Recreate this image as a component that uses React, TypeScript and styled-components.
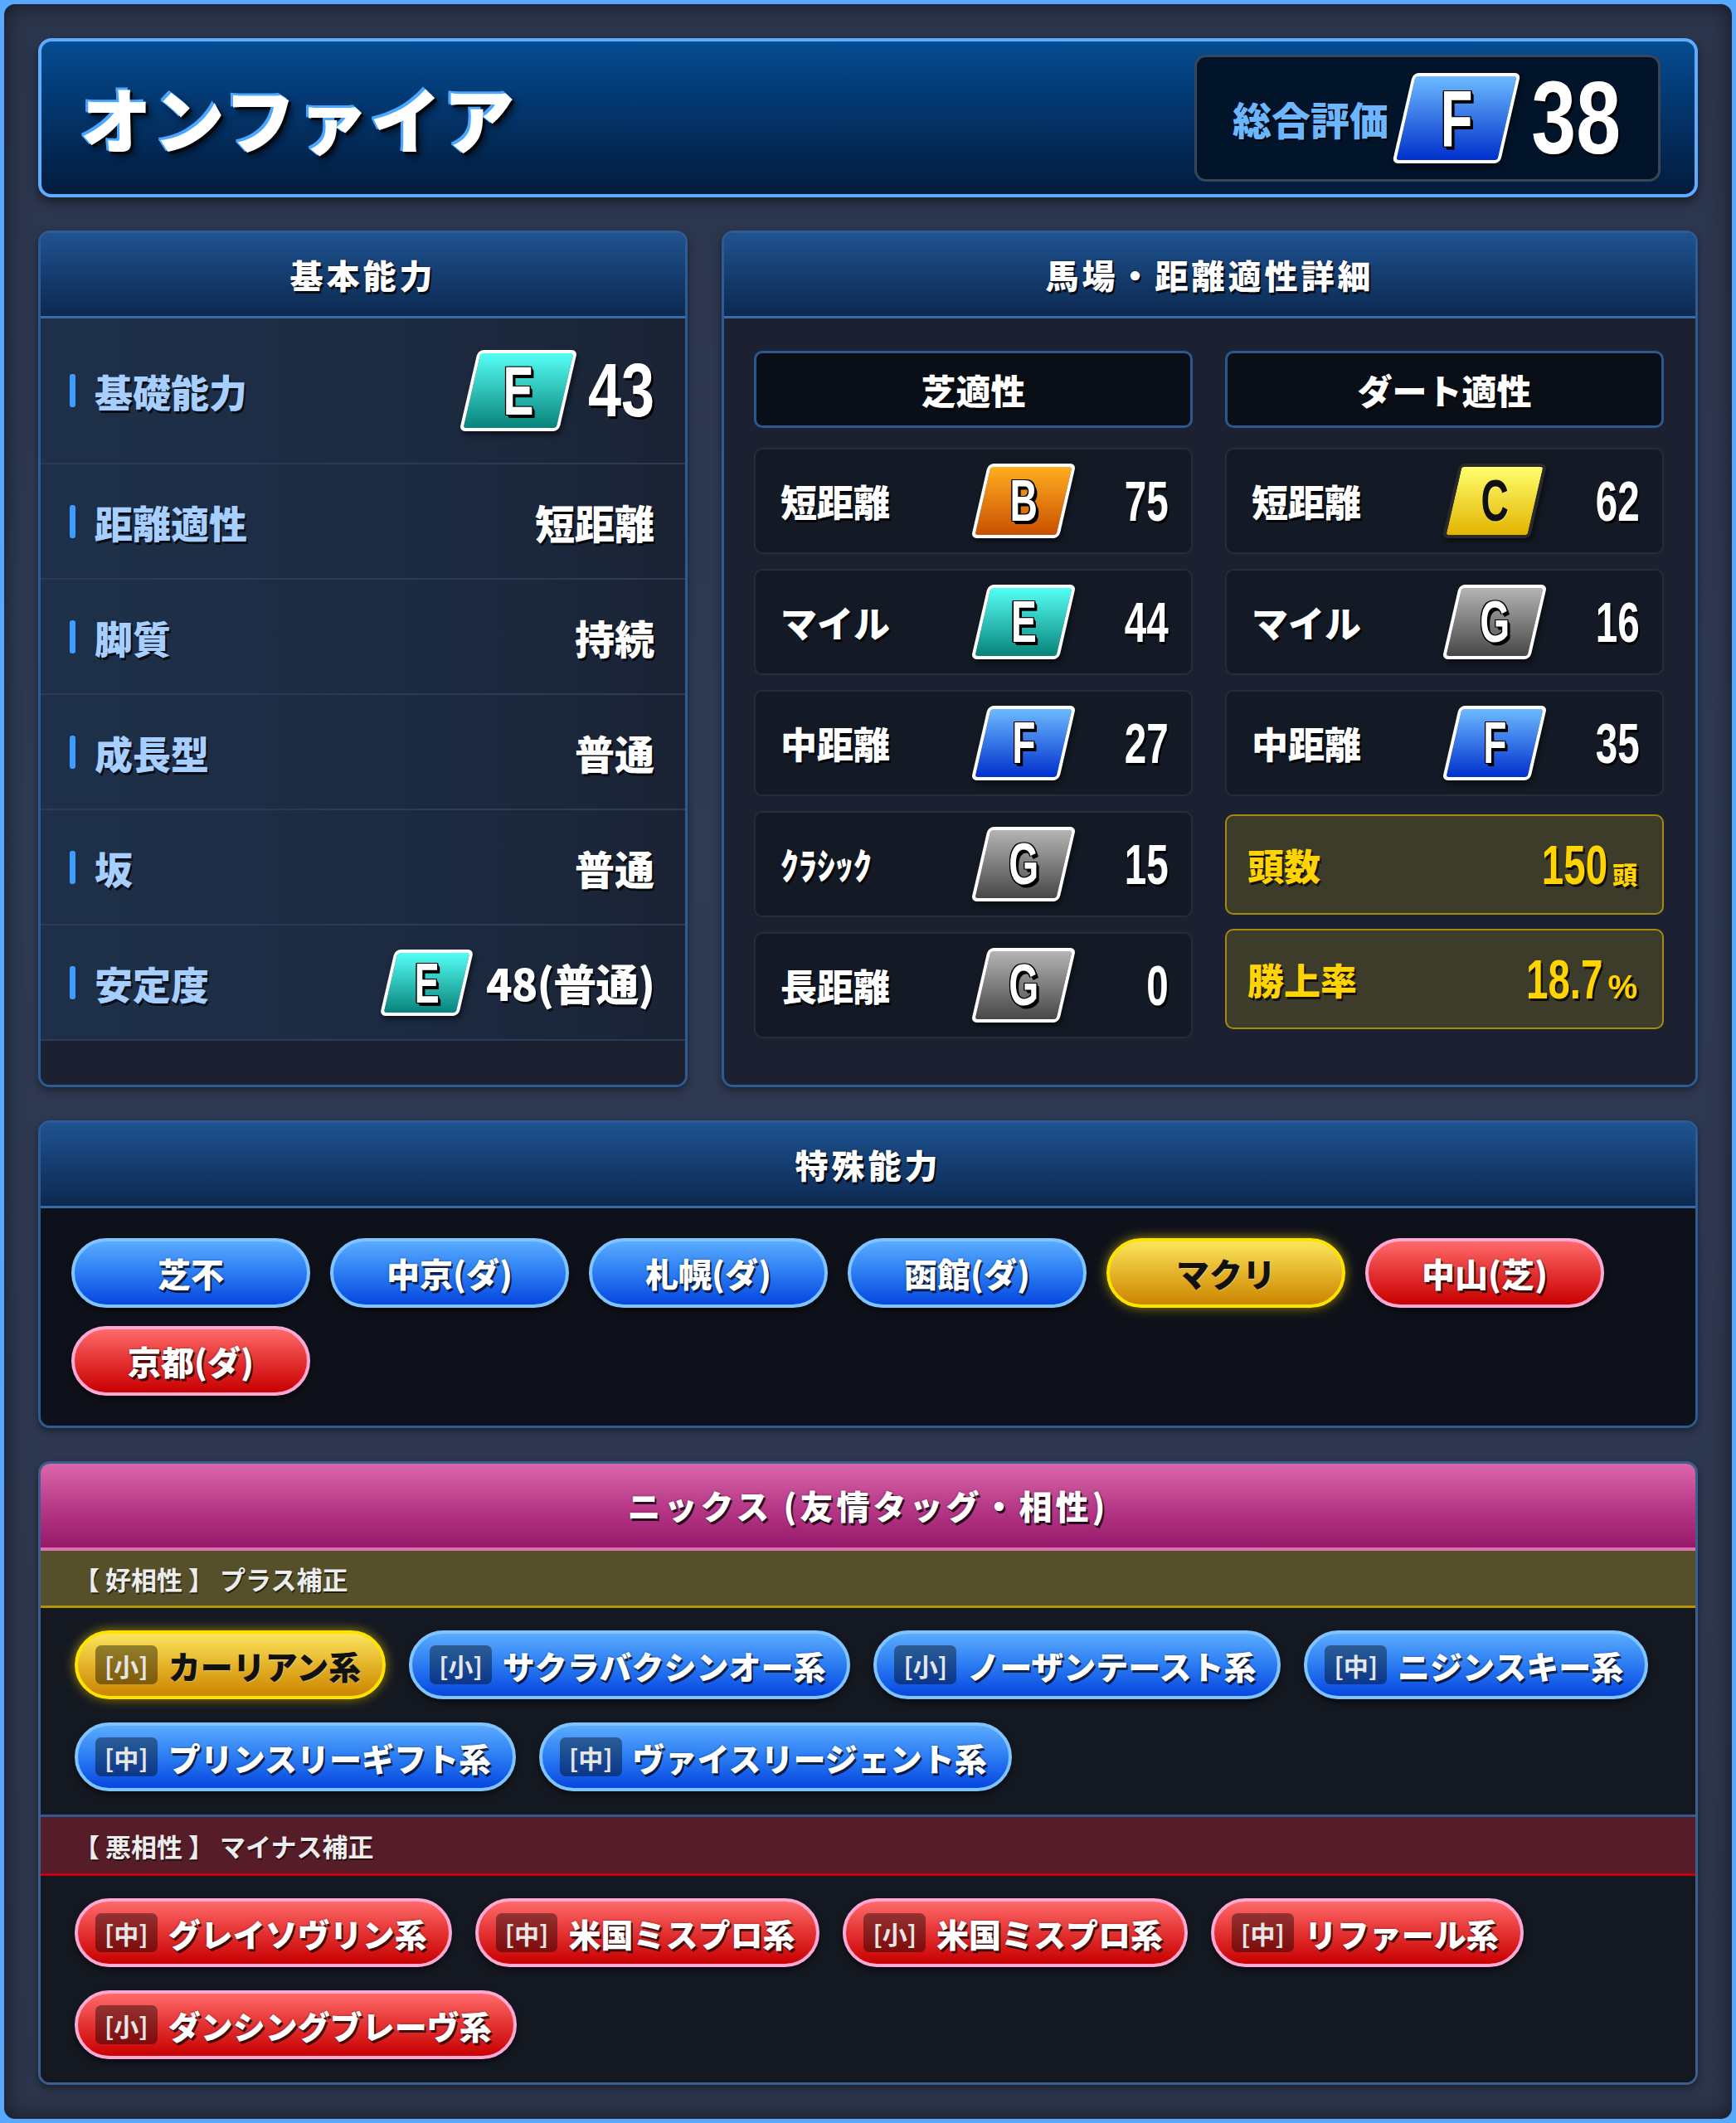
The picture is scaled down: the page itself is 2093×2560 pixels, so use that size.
import React from "react";
import styled, { createGlobalStyle } from "styled-components";

const JP = `"Noto Sans CJK JP", "Noto Sans", sans-serif`;
const NUM = `"Liberation Sans", Arimo, sans-serif`;

const Global = createGlobalStyle`
  html, body { margin: 0; padding: 0; background: #56a9ff; }
  body { width: 2093px; height: 2560px; overflow: hidden; font-family: ${JP}; }
  #root { width: 2093px; height: 2560px; }
  * { box-sizing: border-box; }
`;

const Frame = styled.div`
  width: 2093px;
  height: 2560px;
  border: 5px solid #56a9ff;
  border-radius: 18px;
  background: linear-gradient(180deg, #2b354c 0%, #2f3a53 40%, #2c354b 100%);
  box-shadow: inset 0 0 26px rgba(0, 0, 0, 0.55);
  padding: 41px;
  display: flex;
  flex-direction: column;
  gap: 40px;
`;

/* condensed number: fixed layout box, glyphs squeezed horizontally */
const Squeeze = styled.span<{ $w: number; $sx: number; $left?: boolean }>`
  display: inline-flex;
  width: ${(p) => p.$w}px;
  justify-content: ${(p) => (p.$left ? "flex-start" : "flex-end")};
  white-space: nowrap;
  & > span {
    display: inline-block;
    transform: scaleX(${(p) => p.$sx});
    transform-origin: ${(p) => (p.$left ? "left" : "right")} center;
  }
`;

const Num = ({ v, w, sx, left }: { v: string | number; w: number; sx: number; left?: boolean }) => (
  <Squeeze $w={w} $sx={sx} $left={left}>
    <span>{v}</span>
  </Squeeze>
);

/* ---------- header ---------- */
const Header = styled.header`
  height: 192px;
  flex-shrink: 0;
  border: 4px solid #5cadff;
  border-radius: 16px;
  background: linear-gradient(180deg, #054c92 0%, #03356c 45%, #021b3c 100%);
  box-shadow: 0 6px 12px rgba(0, 0, 0, 0.45);
  display: flex;
  align-items: center;
  justify-content: space-between;
  padding: 0 41px 0 47px;
`;

const HorseName = styled.h1`
  margin: 0;
  font-family: ${JP};
  font-weight: 900;
  font-size: 86px;
  letter-spacing: 2px;
  line-height: 1;
  color: #fff;
  text-shadow: -3px -3px 0 #4aa6ff, -3px -1px 0 #4aa6ff, 3px 3px 0 #05070c,
    5px 6px 8px rgba(0, 0, 0, 0.6);
`;

const ScoreBox = styled.div`
  height: 153px;
  display: flex;
  align-items: center;
  gap: 17px;
  padding: 0 45px 0 43px;
  background: #021429;
  border: 3px solid #3a4656;
  border-radius: 14px;
`;

const ScoreLabel = styled.span`
  font-family: ${JP};
  font-weight: 900;
  font-size: 47px;
  color: #6cb6ff;
  text-shadow: 2px 2px 0 rgba(0, 0, 0, 0.8);
`;

const ScoreValue = styled.span`
  font-family: ${NUM};
  font-weight: 700;
  font-size: 124px;
  line-height: 1;
  color: #fff;
  margin-left: 8px;
  text-shadow: 3px 3px 0 #000;
`;

/* ---------- grade badge ---------- */
type Tone = "B" | "C" | "E" | "F" | "G";
const toneFill: Record<Tone, [string, string]> = {
  B: ["#ffae1f", "#c94f00"],
  C: ["#ffff6e", "#e2b400"],
  E: ["#55fff6", "#07837a"],
  F: ["#6cbaff", "#002fcc"],
  G: ["#b4b4b4", "#474747"],
};

const Badge = styled.div<{ $w: number; $h: number; $tone: Tone }>`
  width: ${(p) => p.$w}px;
  height: ${(p) => p.$h}px;
  flex-shrink: 0;
  transform: skewX(-13deg);
  border: 4px solid ${(p) => (p.$tone === "C" ? "#2a2a2a" : "#ffffff")};
  border-radius: 7px;
  background: linear-gradient(
    180deg,
    ${(p) => toneFill[p.$tone][0]} 0%,
    ${(p) => toneFill[p.$tone][1]} 100%
  );
  box-shadow: 3px 4px 6px rgba(0, 0, 0, 0.55);
  display: flex;
  align-items: center;
  justify-content: center;
`;

const BadgeLetter = styled.span<{ $size: number; $dark: boolean }>`
  display: inline-block;
  transform: skewX(13deg) scaleX(0.66);
  font-family: ${NUM};
  font-weight: 700;
  font-size: ${(p) => p.$size}px;
  line-height: 1;
  color: ${(p) => (p.$dark ? "#111" : "#fff")};
  text-shadow: ${(p) =>
    p.$dark
      ? "1px 1px 0 rgba(255,255,255,0.35)"
      : "-2px -1px 0 #000, 2px -1px 0 #000, -2px 1px 0 #000, 2px 1px 0 #000, 3px 2px 0 #000, 4px 3px 0 #000, 5px 4px 0 #000"};
`;

const Grade = ({ g, w, h, size }: { g: Tone; w: number; h: number; size: number }) => (
  <Badge $w={w} $h={h} $tone={g}>
    <BadgeLetter $size={size} $dark={g === "C"}>
      {g}
    </BadgeLetter>
  </Badge>
);

/* ---------- panels ---------- */
const PanelRow = styled.div`
  height: 1033px;
  flex-shrink: 0;
  display: grid;
  grid-template-columns: 783px 1177px;
  gap: 41px;
`;

const Panel = styled.section<{ $pink?: boolean }>`
  border: 3px solid ${(p) => (p.$pink ? "#3a5f90" : "#2c5b95")};
  border-radius: 14px;
  overflow: hidden;
  display: flex;
  flex-direction: column;
  box-shadow: 0 4px 10px rgba(0, 0, 0, 0.4);
  background: #1b2131;
`;

const PanelHeader = styled.div<{ $pink?: boolean }>`
  height: ${(p) => (p.$pink ? 105 : 103)}px;
  flex-shrink: 0;
  display: flex;
  align-items: center;
  justify-content: center;
  background: ${(p) =>
    p.$pink
      ? "linear-gradient(180deg, #dc66ab 0%, #b83a88 50%, #961868 100%)"
      : "linear-gradient(180deg, #1f5391 0%, #153d70 50%, #0c2950 100%)"};
  border-bottom: ${(p) => (p.$pink ? "4px solid #e070b4" : "3px solid #3b6ca6")};
  font-family: ${JP};
  font-weight: 900;
  font-size: 40px;
  letter-spacing: 4px;
  color: #fff;
  text-shadow: 2px 3px 0 rgba(0, 0, 0, 0.75), 0 0 3px rgba(0, 0, 0, 0.4);
`;

/* basic stats */
const StatRow = styled.div<{ $h: number }>`
  height: ${(p) => p.$h}px;
  flex-shrink: 0;
  display: flex;
  align-items: center;
  padding: 0 37px 0 35px;
  background: linear-gradient(90deg, #1e3049 0%, #1c2b42 55%, #1a2334 100%);
  border-bottom: 2px solid #2b3b55;
`;

const StatLabel = styled.div`
  display: flex;
  align-items: center;
  gap: 23px;
  font-family: ${JP};
  font-weight: 900;
  font-size: 46px;
  color: #a6cfff;
  text-shadow: 2px 3px 0 rgba(0, 0, 0, 0.7);
`;

const LabelBar = styled.span`
  width: 7px;
  height: 40px;
  border-radius: 3px;
  background: #3f9cff;
`;

const StatValue = styled.div`
  margin-left: auto;
  display: flex;
  align-items: center;
  gap: 24px;
  font-family: ${JP};
  font-weight: 900;
  font-size: 48px;
  color: #fff;
  text-shadow: 2px 3px 0 rgba(0, 0, 0, 0.75);
`;

const StableText = styled.span`
  font-size: 52px;
  letter-spacing: -1px;
`;

const BigNumber = styled.span`
  font-family: ${NUM};
  font-weight: 700;
  font-size: 90px;
  line-height: 1;
  color: #fff;
  text-shadow: 3px 3px 0 #000;
`;

const Filler = styled.div`
  flex: 1;
  background: #1b2130;
`;

/* aptitude detail */
const DetailBody = styled.div`
  flex: 1;
  padding: 39px 38px 0 36px;
  display: flex;
  flex-direction: column;
  gap: 24px;
  background: #1b2131;
`;

const TwoCols = styled.div`
  display: grid;
  grid-template-columns: 1fr 1fr;
  column-gap: 39px;
`;

const SubHead = styled.div`
  height: 93px;
  display: flex;
  align-items: center;
  justify-content: center;
  background: #0a0e16;
  border: 3px solid #2b5890;
  border-radius: 10px;
  font-family: ${JP};
  font-weight: 900;
  font-size: 42px;
  color: #fff;
  text-shadow: 2px 3px 0 rgba(0, 0, 0, 0.8);
`;

const Column = styled.div`
  display: flex;
  flex-direction: column;
  gap: 18px;
`;

const AptCell = styled.div`
  height: 128px;
  display: grid;
  grid-template-columns: 1fr 130px 110px;
  align-items: center;
  padding: 0 27px 0 30px;
  background: #141a25;
  border: 2px solid #262d3a;
  border-radius: 10px;
`;

const AptLabel = styled.span`
  font-family: ${JP};
  font-weight: 900;
  font-size: 44px;
  color: #fff;
  white-space: nowrap;
  text-shadow: 2px 3px 0 rgba(0, 0, 0, 0.8);
`;

const BadgeSlot = styled.div`
  display: flex;
  justify-content: center;
`;

const AptNumber = styled.span`
  justify-self: end;
  font-family: ${NUM};
  font-weight: 700;
  font-size: 68px;
  line-height: 1;
  color: #fff;
  text-shadow: 3px 3px 0 #000;
`;

const GoldGroup = styled.div`
  margin-top: 4px;
  display: flex;
  flex-direction: column;
  gap: 17px;
`;

const GoldBox = styled.div`
  height: 121px;
  display: flex;
  align-items: center;
  justify-content: space-between;
  padding: 0 30px 0 25px;
  background: #3d3b29;
  border: 2px solid #a88a10;
  border-radius: 10px;
`;

const GoldLabel = styled.span`
  font-family: ${JP};
  font-weight: 900;
  font-size: 44px;
  color: #ffd400;
  text-shadow: 2px 3px 0 rgba(0, 0, 0, 0.7);
`;

const GoldValue = styled.span`
  display: flex;
  align-items: baseline;
  gap: 6px;
  font-family: ${NUM};
  font-weight: 700;
  font-size: 66px;
  line-height: 1;
  color: #ffd400;
  text-shadow: 3px 3px 0 rgba(0, 0, 0, 0.75);
`;

const GoldUnit = styled.span<{ $jp?: boolean }>`
  font-family: ${(p) => (p.$jp ? JP : NUM)};
  font-weight: ${(p) => (p.$jp ? 900 : 700)};
  font-size: ${(p) => (p.$jp ? 30 : 40)}px;
`;

/* pills */
type PillTone = "blue" | "gold" | "red";
const pillStyle: Record<PillTone, { bg: string; border: string; glow: string; color: string }> = {
  blue: {
    bg: "linear-gradient(180deg, #5aabff 0%, #2b7cf2 50%, #0646e0 100%)",
    border: "#80c4ff",
    glow: "0 4px 6px rgba(0,0,0,0.55)",
    color: "#fff",
  },
  gold: {
    bg: "linear-gradient(180deg, #fbe55e 0%, #e4b42a 50%, #cc8400 100%)",
    border: "#ffe300",
    glow: "0 0 14px rgba(255, 222, 0, 0.6), 0 4px 6px rgba(0,0,0,0.4)",
    color: "#111",
  },
  red: {
    bg: "linear-gradient(180deg, #ff6a6a 0%, #e43232 50%, #c80000 100%)",
    border: "#ffa8d6",
    glow: "0 4px 6px rgba(0,0,0,0.55)",
    color: "#fff",
  },
};

const SpecialBody = styled.div`
  background: #0e111a;
  padding: 36px 37px;
  display: flex;
  flex-wrap: wrap;
  gap: 22px 24px;
`;

const SkillPill = styled.div<{ $tone: PillTone }>`
  width: 288px;
  height: 84px;
  border-radius: 42px;
  border: 4px solid ${(p) => pillStyle[p.$tone].border};
  background: ${(p) => pillStyle[p.$tone].bg};
  box-shadow: ${(p) => pillStyle[p.$tone].glow};
  display: flex;
  align-items: center;
  justify-content: center;
  font-family: ${JP};
  font-weight: 900;
  font-size: 40px;
  color: ${(p) => pillStyle[p.$tone].color};
  text-shadow: ${(p) =>
    p.$tone === "gold"
      ? "1px 1px 0 rgba(255,255,255,0.3)"
      : "2px 3px 0 rgba(0,0,0,0.7), 0 0 3px rgba(0,0,0,0.4)"};
`;

/* nicks */
const NickBand = styled.div<{ $bad?: boolean }>`
  height: ${(p) => (p.$bad ? 71 : 70)}px;
  display: flex;
  align-items: center;
  padding: 0 40px;
  background: ${(p) => (p.$bad ? "#561c28" : "#55502a")};
  border-bottom: 3px solid ${(p) => (p.$bad ? "#c8000e" : "#b39500")};
  font-family: ${JP};
  font-weight: 700;
  font-size: 31px;
  color: #ececec;
  text-shadow: 1px 2px 0 rgba(0, 0, 0, 0.6);
  white-space: pre;
`;

const NickGroup = styled.div<{ $sep?: boolean }>`
  padding: 27px 36px 28px 41px;
  display: flex;
  flex-wrap: wrap;
  gap: 28px 28px;
  background: #141821;
  border-bottom: ${(p) => (p.$sep ? "3px solid #2f5b90" : "none")};
`;

const NickPill = styled.div<{ $tone: PillTone }>`
  height: 83px;
  border-radius: 42px;
  border: 4px solid ${(p) => pillStyle[p.$tone].border};
  background: ${(p) => pillStyle[p.$tone].bg};
  box-shadow: ${(p) => pillStyle[p.$tone].glow};
  padding: 0 26px 0 21px;
  display: flex;
  align-items: center;
  gap: 13px;
`;

const NickTag = styled.span`
  height: 47px;
  padding: 0 11px;
  border-radius: 7px;
  background: rgba(0, 0, 0, 0.4);
  display: flex;
  align-items: center;
  font-family: ${JP};
  font-weight: 700;
  font-size: 30px;
  color: #e6e6e6;
`;

const NickName = styled.span<{ $tone: PillTone }>`
  font-family: ${JP};
  font-weight: 900;
  font-size: 39px;
  white-space: nowrap;
  color: ${(p) => pillStyle[p.$tone].color};
  text-shadow: ${(p) =>
    p.$tone === "gold"
      ? "1px 1px 0 rgba(255,255,255,0.3)"
      : "2px 3px 0 rgba(0,0,0,0.7), 0 0 3px rgba(0,0,0,0.4)"};
`;

/* ---------- data ---------- */
const turf: [string, Tone, number][] = [
  ["短距離", "B", 75],
  ["マイル", "E", 44],
  ["中距離", "F", 27],
  ["ｸﾗｼｯｸ", "G", 15],
  ["長距離", "G", 0],
];
const dirt: [string, Tone, number][] = [
  ["短距離", "C", 62],
  ["マイル", "G", 16],
  ["中距離", "F", 35],
];
const skills: [string, PillTone][] = [
  ["芝不", "blue"],
  ["中京(ダ)", "blue"],
  ["札幌(ダ)", "blue"],
  ["函館(ダ)", "blue"],
  ["マクリ", "gold"],
  ["中山(芝)", "red"],
  ["京都(ダ)", "red"],
];
const goodNicks: [string, string, PillTone][] = [
  ["小", "カーリアン系", "gold"],
  ["小", "サクラバクシンオー系", "blue"],
  ["小", "ノーザンテースト系", "blue"],
  ["中", "ニジンスキー系", "blue"],
  ["中", "プリンスリーギフト系", "blue"],
  ["中", "ヴァイスリージェント系", "blue"],
];
const badNicks: [string, string][] = [
  ["中", "グレイソヴリン系"],
  ["中", "米国ミスプロ系"],
  ["小", "米国ミスプロ系"],
  ["中", "リファール系"],
  ["小", "ダンシングブレーヴ系"],
];

const AptRow = ({ label, g, n }: { label: string; g: Tone; n: number }) => (
  <AptCell>
    <AptLabel>{label}</AptLabel>
    <BadgeSlot>
      <Grade g={g} w={106} h={90} size={70} />
    </BadgeSlot>
    <AptNumber>
      <Num v={n} w={100} sx={0.7} />
    </AptNumber>
  </AptCell>
);

export default function App() {
  return (
    <>
      <Global />
      <Frame>
        <Header>
          <HorseName>オンファイア</HorseName>
          <ScoreBox>
            <ScoreLabel>総合評価</ScoreLabel>
            <Grade g="F" w={130} h={109} size={96} />
            <ScoreValue>
              <Num v="38" w={108} sx={0.78} />
            </ScoreValue>
          </ScoreBox>
        </Header>

        <PanelRow>
          <Panel>
            <PanelHeader>基本能力</PanelHeader>
            <StatRow $h={176}>
              <StatLabel>
                <LabelBar />
                基礎能力
              </StatLabel>
              <StatValue>
                <Grade g="E" w={120} h={98} size={84} />
                <BigNumber>
                  <Num v="43" w={80} sx={0.8} />
                </BigNumber>
              </StatValue>
            </StatRow>
            {[
              ["距離適性", "短距離"],
              ["脚質", "持続"],
              ["成長型", "普通"],
              ["坂", "普通"],
            ].map(([l, v]) => (
              <StatRow $h={139} key={l}>
                <StatLabel>
                  <LabelBar />
                  {l}
                </StatLabel>
                <StatValue>{v}</StatValue>
              </StatRow>
            ))}
            <StatRow $h={139}>
              <StatLabel>
                <LabelBar />
                安定度
              </StatLabel>
              <StatValue>
                <Grade g="E" w={95} h={80} size={68} />
                <StableText>48(普通)</StableText>
              </StatValue>
            </StatRow>
            <Filler />
          </Panel>

          <Panel>
            <PanelHeader>馬場・距離適性詳細</PanelHeader>
            <DetailBody>
              <TwoCols>
                <SubHead>芝適性</SubHead>
                <SubHead>ダート適性</SubHead>
              </TwoCols>
              <TwoCols>
                <Column>
                  {turf.map(([l, g, n]) => (
                    <AptRow key={l} label={l} g={g} n={n} />
                  ))}
                </Column>
                <Column>
                  {dirt.map(([l, g, n]) => (
                    <AptRow key={l} label={l} g={g} n={n} />
                  ))}
                  <GoldGroup>
                    <GoldBox>
                      <GoldLabel>頭数</GoldLabel>
                      <GoldValue>
                        <Num v="150" w={80} sx={0.72} />
                        <GoldUnit $jp>頭</GoldUnit>
                      </GoldValue>
                    </GoldBox>
                    <GoldBox>
                      <GoldLabel>勝上率</GoldLabel>
                      <GoldValue>
                        <Num v="18.7" w={93} sx={0.72} />
                        <GoldUnit>%</GoldUnit>
                      </GoldValue>
                    </GoldBox>
                  </GoldGroup>
                </Column>
              </TwoCols>
            </DetailBody>
          </Panel>
        </PanelRow>

        <Panel>
          <PanelHeader>特殊能力</PanelHeader>
          <SpecialBody>
            {skills.map(([s, t]) => (
              <SkillPill key={s} $tone={t}>
                {s}
              </SkillPill>
            ))}
          </SpecialBody>
        </Panel>

        <Panel $pink>
          <PanelHeader $pink>ニックス (友情タッグ・相性)</PanelHeader>
          <NickBand>{"【 好相性 】 プラス補正"}</NickBand>
          <NickGroup $sep>
            {goodNicks.map(([sz, name, t], i) => (
              <NickPill key={i} $tone={t}>
                <NickTag>[{sz}]</NickTag>
                <NickName $tone={t}>{name}</NickName>
              </NickPill>
            ))}
          </NickGroup>
          <NickBand $bad>{"【 悪相性 】 マイナス補正"}</NickBand>
          <NickGroup>
            {badNicks.map(([sz, name], i) => (
              <NickPill key={i} $tone="red">
                <NickTag>[{sz}]</NickTag>
                <NickName $tone="red">{name}</NickName>
              </NickPill>
            ))}
          </NickGroup>
        </Panel>
      </Frame>
    </>
  );
}
